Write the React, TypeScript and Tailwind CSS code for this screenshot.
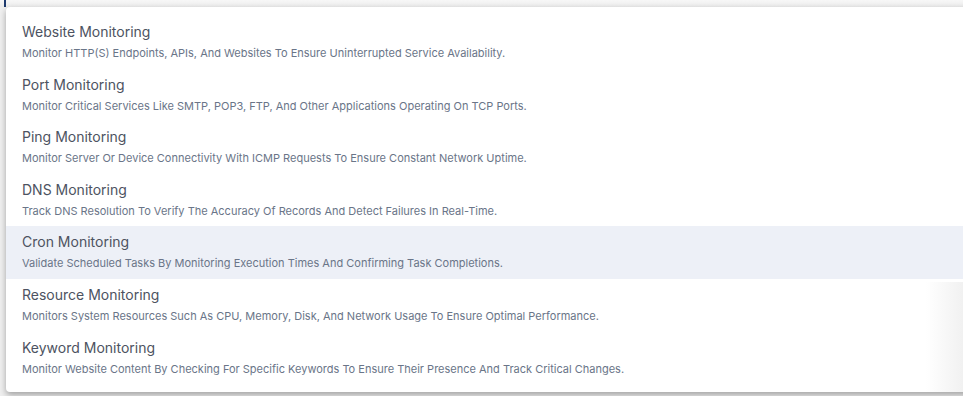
import React from "react";

const items = [
  { t: "Website Monitoring", d: "Monitor HTTP(S) Endpoints, APIs, And Websites To Ensure Uninterrupted Service Availability." },
  { t: "Port Monitoring", d: "Monitor Critical Services Like SMTP, POP3, FTP, And Other Applications Operating On TCP Ports." },
  { t: "Ping Monitoring", d: "Monitor Server Or Device Connectivity With ICMP Requests To Ensure Constant Network Uptime." },
  { t: "DNS Monitoring", d: "Track DNS Resolution To Verify The Accuracy Of Records And Detect Failures In Real-Time." },
  { t: "Cron Monitoring", d: "Validate Scheduled Tasks By Monitoring Execution Times And Confirming Task Completions.", active: true },
  { t: "Resource Monitoring", d: "Monitors System Resources Such As CPU, Memory, Disk, And Network Usage To Ensure Optimal Performance." },
  { t: "Keyword Monitoring", d: "Monitor Website Content By Checking For Specific Keywords To Ensure Their Presence And Track Critical Changes." },
];

export default function App() {
  return (
    <div
      className="w-[963px] h-[396px] overflow-hidden bg-[#efefef]"
      style={{ fontFamily: "Inter, 'Noto Sans', sans-serif" }}
    >
      <div className="h-[7px] bg-gradient-to-b from-[#f7f7f7] to-[#ececec] flex">
        <div className="ml-[4px] w-[2px] h-full bg-[#1e3a6e]" />
      </div>
      <div className="ml-[6px] w-[1000px] h-[385px] bg-white rounded-[4px] shadow-[0_3px_6px_rgba(0,0,0,0.32)] py-[9px] relative">
        {items.map((it) => (
          <div
            key={it.t}
            className={`h-[52.6px] pl-[16px] flex flex-col pt-[7px] ${it.active ? "bg-[#edf0f7]" : ""}`}
          >
            <div className="text-[14px] leading-[18px] text-[#4d5361]">{it.t}</div>
            <div className="mt-[4px] text-[11px] leading-[16px] text-[#6a7588]">{it.d}</div>
          </div>
        ))}
        <div className="absolute left-[920px] bottom-0 w-[40px] h-[110px] bg-gradient-to-r from-transparent to-[#ececec] opacity-80 pointer-events-none" />
      </div>
    </div>
  );
}
